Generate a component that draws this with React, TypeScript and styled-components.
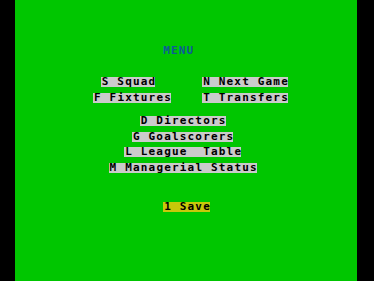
import React from 'react';
import styled, { createGlobalStyle } from 'styled-components';

// one character cell of the old 8-bit screen, scaled to this window
const CELL = 7.8;

interface IMenuItem {
  label: string;
  col: number;
  row: number;
}

const menuItems: Array<IMenuItem> = [
  { label: 'S Squad', col: 11, row: 9 },
  { label: 'N Next Game', col: 24, row: 9 },
  { label: 'F Fixtures', col: 10, row: 11 },
  { label: 'T Transfers', col: 24, row: 11 },
  { label: 'D Directors', col: 16, row: 14 },
  { label: 'G Goalscorers', col: 15, row: 16 },
  { label: 'L League  Table', col: 14, row: 18 },
  { label: 'M Managerial Status', col: 12, row: 20 },
];

const App = () => {
  return (
    <>
      <GlobalStyle />
      <Screen>
        <Paper>
          <Title $col={19} $row={5}>
            MENU
          </Title>
          {menuItems.map((item) => (
            <Option key={item.label} $col={item.col} $row={item.row} $span={item.label.length}>
              {item.label}
            </Option>
          ))}
          <Option $col={19} $row={25} $span={6} $highlight>
            1 Save
          </Option>
        </Paper>
      </Screen>
    </>
  );
};

const GlobalStyle = createGlobalStyle`
  html, body {
    margin: 0;
    padding: 0;
    background: #000;
  }
`;

const Screen = styled.div`
  display: flex;
  width: 374px;
  height: 281px;
  padding-left: 15px;
  box-sizing: border-box;
  background: #000;
  overflow: hidden;
`;

const Paper = styled.div`
  display: grid;
  grid-template-columns: repeat(44, ${CELL}px);
  grid-auto-rows: ${CELL}px;
  align-content: start;
  padding-top: 6.8px;
  width: 342px;
  height: 281px;
  box-sizing: border-box;
  background: #00c600;
  overflow: hidden;
`;

const Cell = styled.div<{ $col: number; $row: number }>`
  grid-column: ${(props) => props.$col + 1} / span 1;
  grid-row: ${(props) => props.$row + 1};
  align-self: start;
  height: 10px;
  line-height: 10px;
  font-family: 'DejaVu Sans Mono', 'Liberation Mono', monospace;
  font-weight: bold;
  font-size: 11px;
  letter-spacing: 1.18px;
  white-space: pre;
`;

const Title = styled(Cell)`
  grid-column: ${(props) => props.$col + 1} / span 4;
  color: #0d5c98;
`;

const Option = styled(Cell)<{ $span: number; $highlight?: boolean }>`
  grid-column: ${(props) => props.$col + 1} / span ${(props) => props.$span};
  padding-left: 1px;
  color: #000;
  background: ${(props) => (props.$highlight ? '#c8c80a' : '#cbcbcb')};
`;

export default App;
